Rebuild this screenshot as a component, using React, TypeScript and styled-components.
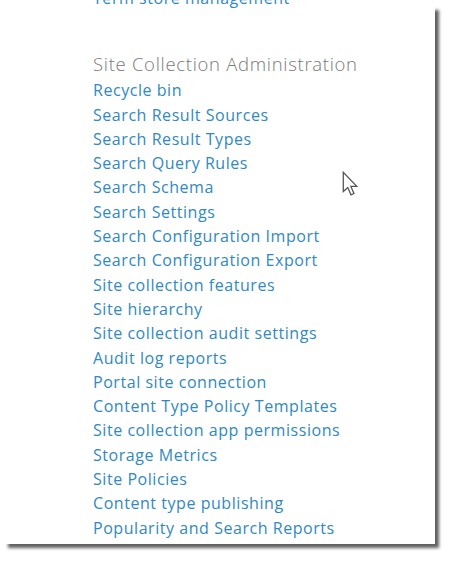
import styled, { createGlobalStyle } from "styled-components";

const GlobalStyle = createGlobalStyle`
  html, body {
    margin: 0;
    padding: 0;
    background: #ffffff;
  }
  body {
    width: 452px;
    height: 561px;
    overflow: hidden;
  }
`;

const Paper = styled.div`
  position: relative;
  display: flex;
  flex-direction: column;
  margin: 6px 0 0 4px;
  width: 431px;
  height: 538px;
  background: #ffffff;
  box-shadow: 4px 4px 3px rgba(0, 0, 0, 0.62);
`;

const Clip = styled.div`
  margin-top: -20px;
  height: calc(100% + 20px);
  overflow: hidden;
  padding-left: 89px;
  font-family: "Open Sans", "Noto Sans", sans-serif;
`;

const LinkList = styled.ul`
  list-style: none;
  margin: 0;
  padding: 0;
`;

const LinkItem = styled.li`
  height: 24.3px;
  line-height: 24.3px;
  font-size: 16px;
  letter-spacing: 0.55px;
  color: #3089c2;
  white-space: nowrap;
  cursor: pointer;
`;

const Section = styled.div<{ gap?: number }>`
  margin-top: ${({ gap }) => gap ?? 0}px;
`;

const SectionTitle = styled.h3`
  margin: 0;
  height: 28px;
  line-height: 28px;
  font-size: 18.5px;
  font-weight: 300;
  letter-spacing: 0.7px;
  color: #7a7a7a;
  white-space: nowrap;
`;

const Pointer = styled.svg`
  position: absolute;
  left: 338px;
  top: 165px;
`;

const siteCollectionLinks = [
  "Recycle bin",
  "Search Result Sources",
  "Search Result Types",
  "Search Query Rules",
  "Search Schema",
  "Search Settings",
  "Search Configuration Import",
  "Search Configuration Export",
  "Site collection features",
  "Site hierarchy",
  "Site collection audit settings",
  "Audit log reports",
  "Portal site connection",
  "Content Type Policy Templates",
  "Site collection app permissions",
  "Storage Metrics",
  "Site Policies",
  "Content type publishing",
  "Popularity and Search Reports",
  "HTML Field Security",
];

export default function App() {
  return (
    <>
      <GlobalStyle />
      <Paper>
        <Clip>
          <LinkList>
            <LinkItem>Term store management</LinkItem>
          </LinkList>

          <Section gap={40}>
            <SectionTitle>Site Collection Administration</SectionTitle>
            <LinkList>
              {siteCollectionLinks.map((l) => (
                <LinkItem key={l}>{l}</LinkItem>
              ))}
            </LinkList>
          </Section>
        </Clip>

        {/* mouse pointer over the page */}
        <Pointer width="18" height="27" viewBox="0 0 14 21">
          <path
            d="M1 1 L1 16 L4.5 12.8 L7 18.5 L9.3 17.5 L6.9 12 L11.5 12 Z"
            fill="#ffffff"
            stroke="#555555"
            strokeWidth="1"
            strokeLinejoin="miter"
          />
        </Pointer>
      </Paper>
    </>
  );
}
